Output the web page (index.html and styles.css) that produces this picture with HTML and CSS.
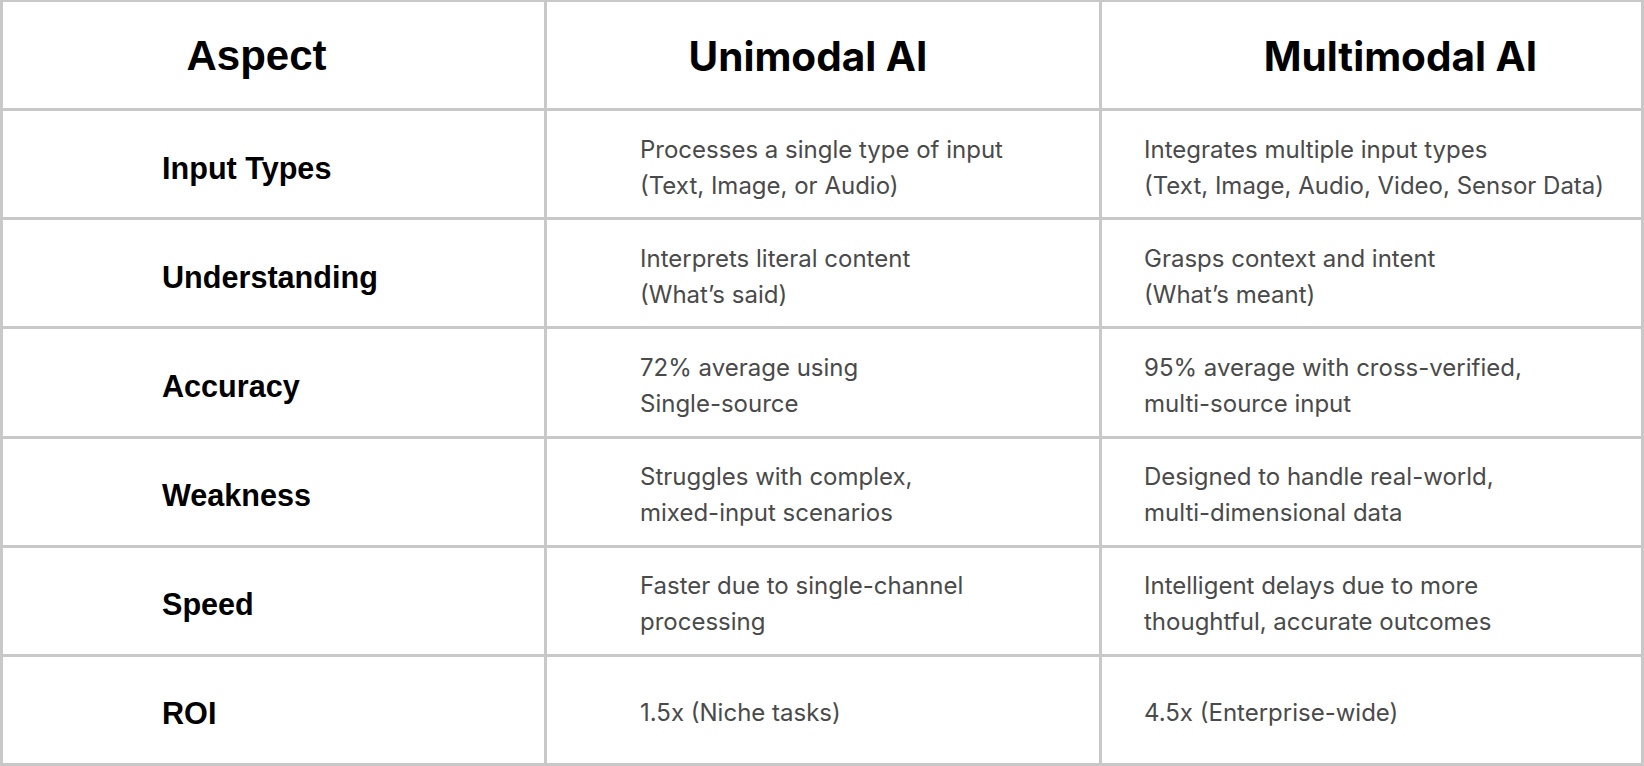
FILE: index.html
```html
<!DOCTYPE html>
<html>
<head>
<meta charset="utf-8">
<link rel="stylesheet" href="styles.css">
</head>
<body>
<div class="table">
  <div class="cell head c1"><span class="h-aspect">Aspect</span></div>
  <div class="cell head c2"><span class="h-model">Unimodal AI</span></div>
  <div class="cell head c3"><span class="h-model">Multimodal AI</span></div>

  <div class="cell label"><span>Input Types</span></div>
  <div class="cell body c2"><p>Processes a single type of input<br>(Text, Image, or Audio)</p></div>
  <div class="cell body c3"><p>Integrates multiple input types<br>(Text, Image, Audio, Video, Sensor Data)</p></div>

  <div class="cell label"><span>Understanding</span></div>
  <div class="cell body c2"><p>Interprets literal content<br>(What’s said)</p></div>
  <div class="cell body c3"><p>Grasps context and intent<br>(What’s meant)</p></div>

  <div class="cell label"><span>Accuracy</span></div>
  <div class="cell body c2"><p>72% average using<br>Single-source</p></div>
  <div class="cell body c3"><p>95% average with cross-verified,<br>multi-source input</p></div>

  <div class="cell label"><span>Weakness</span></div>
  <div class="cell body c2"><p>Struggles with complex,<br>mixed-input scenarios</p></div>
  <div class="cell body c3"><p>Designed to handle real-world,<br>multi-dimensional data</p></div>

  <div class="cell label"><span>Speed</span></div>
  <div class="cell body c2"><p>Faster due to single-channel<br>processing</p></div>
  <div class="cell body c3"><p>Intelligent delays due to more<br>thoughtful, accurate outcomes</p></div>

  <div class="cell label"><span>ROI</span></div>
  <div class="cell body c2"><p>1.5x (Niche tasks)</p></div>
  <div class="cell body c3"><p>4.5x (Enterprise-wide)</p></div>
</div>
</body>
</html>
```

FILE: styles.css
```css
html, body {
  margin: 0;
  padding: 0;
  background: #ffffff;
}

.table {
  box-sizing: border-box;
  width: 1644px;
  height: 766px;
  display: grid;
  grid-template-columns: 544px 555px 1fr;
  grid-template-rows: repeat(7, 1fr);
  border-left: 3px solid #c8c8c8;
  border-top: 2px solid #c8c8c8;
}

.cell {
  box-sizing: border-box;
  border-right: 3px solid #c8c8c8;
  border-bottom: 3px solid #c8c8c8;
  display: flex;
  align-items: center;
  min-width: 0;
}

.head {
  justify-content: center;
  padding-top: 2px;
}

.head.c1 { padding-right: 34px; }
.head.c2 { padding-right: 30px; }
.head.c3 { padding-left: 58px; }

.h-aspect {
  font-family: "Liberation Sans", Arial, sans-serif;
  font-weight: 700;
  font-size: 42px;
  color: #000;
}

.h-model {
  font-family: Inter, "Liberation Sans", sans-serif;
  font-weight: 700;
  font-size: 40.5px;
  color: #000;
}

.label {
  padding-left: 159px;
  padding-top: 8px;
  font-family: "Liberation Sans", Arial, sans-serif;
  font-weight: 700;
  font-size: 30.6px;
  color: #000;
}

.body p {
  margin: 0;
  padding-top: 7px;
  font-family: Inter, "Liberation Sans", sans-serif;
  font-size: 24px;
  line-height: 36px;
  color: #4a4a4a;
}

.body.c2 { padding-left: 93px; }
.body.c3 { padding-left: 42px; }
```
